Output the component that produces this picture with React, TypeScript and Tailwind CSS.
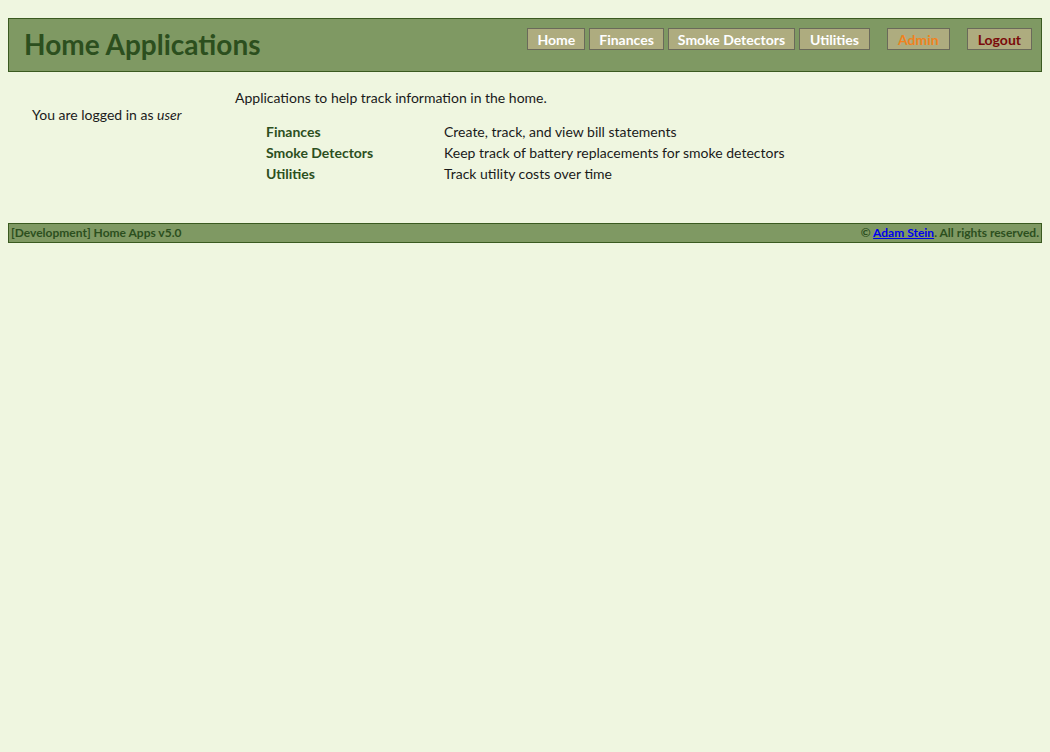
const navItems = [
  { label: 'Home', color: 'text-white', pad: 'px-[9px]' },
  { label: 'Finances', color: 'text-white', pad: 'px-[9px]' },
  { label: 'Smoke Detectors', color: 'text-white', pad: 'px-[9px]' },
  { label: 'Utilities', color: 'text-white', pad: 'px-[10px]' },
];

const apps = [
  { name: 'Finances', description: 'Create, track, and view bill statements' },
  { name: 'Smoke Detectors', description: 'Keep track of battery replacements for smoke detectors' },
  { name: 'Utilities', description: 'Track utility costs over time' },
];

function NavButton({ label, color, pad }: { label: string; color: string; pad: string }) {
  return (
    <a
      href="#"
      className={`flex h-[22px] items-center border border-[#6a6a5a] bg-[#aeac7f] text-[14px] font-bold ${pad} ${color}`}
    >
      {label}
    </a>
  );
}

export default function App() {
  return (
    <div className="min-h-[752px] bg-[#eff6e0] px-2 pt-[18px] font-['Lato','Liberation_Sans',sans-serif] text-[#1a1a1a]">
      {/* header */}
      <header className="flex h-[54px] items-start justify-between border border-[#3a5a20] bg-[#7f9963] pl-[15px] pr-[9px]">
        <h1 className="mt-[8px] text-[28px] font-bold leading-[34px] text-[#2c4f1e]">Home Applications</h1>
        <nav className="mt-[9px] flex items-center">
          <div className="flex gap-1">
            {navItems.map((item) => (
              <NavButton key={item.label} {...item} />
            ))}
          </div>
          <div className="ml-[17px]">
            <NavButton label="Admin" color="text-[#f0821e]" pad="px-[10px]" />
          </div>
          <div className="ml-[17px]">
            <NavButton label="Logout" color="text-[#7a0a0a]" pad="px-[10px]" />
          </div>
        </nav>
      </header>

      {/* content */}
      <div className="flex pt-4 text-[14px]">
        <aside className="w-[227px] pl-6 pt-4">
          You are logged in as <em>user</em>
        </aside>
        <main>
          <p className="leading-5">Applications to help track information in the home.</p>
          <div className="mt-[13px] pl-[31px]">
            {apps.map((app) => (
              <div key={app.name} className="flex h-[21px] items-center">
                <a href="#" className="w-[178px] font-bold text-[#2c4f1e]">
                  {app.name}
                </a>
                <span>{app.description}</span>
              </div>
            ))}
          </div>
        </main>
      </div>

      {/* footer */}
      <footer className="mt-[39px] flex h-5 items-center justify-between border border-[#3a5a20] bg-[#7f9963] px-[2px] text-[12px] font-bold text-[#2c4f1e]">
        <span>[Development] Home Apps v5.0</span>
        <span>
          © <a href="#" className="text-[#0000ee] underline">Adam Stein</a>. All rights reserved.
        </span>
      </footer>
    </div>
  );
}
